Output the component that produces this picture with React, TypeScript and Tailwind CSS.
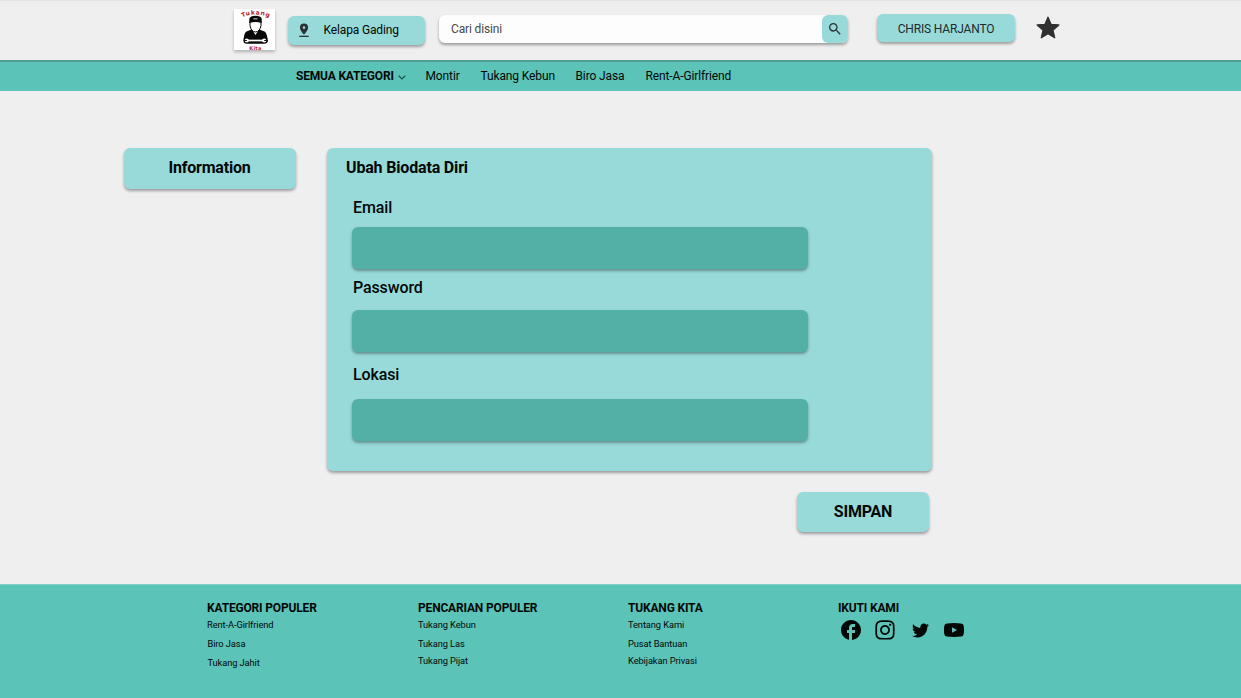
import React from "react";
import { MdSearch, MdFacebook } from "react-icons/md";
import { FaInstagram, FaTwitter } from "react-icons/fa";

const raised = "shadow-[0_2px_3px_rgba(0,0,0,0.34)]";

function Logo() {
  return (
    <svg viewBox="0 0 41 41" className="ml-[234px] mt-[9px] h-[41px] w-[41px] shrink-0 overflow-visible bg-white shadow-[0_2px_3px_rgba(0,0,0,0.25)]">
      <defs>
        <path id="arc" d="M8.300 8.200 Q21.500 2.200 37 9.400" />
      </defs>
      <text fill="#b5232b" fontFamily="DejaVu Sans, sans-serif" fontSize="6" fontWeight="700" textLength="27.500">
        <textPath href="#arc">Tukang</textPath>
      </text>
      <text x="15.300" y="40.700" fill="#b5232b" fontFamily="DejaVu Sans, sans-serif" fontSize="5" fontWeight="700" textLength="12">Kita</text>
      <path d="M17.500 20.500 12.500 22.500Q10.500 23.500 9.800 28.500L9.300 31.500Q9.500 34.800 13 34.800H30Q33.700 34.800 34 31.500L33.200 28Q32.500 23.500 30.500 22.500L25.500 20.500z" fill="#080808" />
      <path d="M18.300 21h6.400l-3.200 5z" fill="#fff" />
      <path d="M16 12h11v4.500q-1 6-5.500 6.500-4.500-.5-5.500-6.500z" fill="#fff" stroke="#080808" strokeWidth="1" />
      <path d="M15.300 14V9.800q.7-3 6.200-3t6.200 3V14q-6-2-12.400 0z" fill="#080808" />
      <path d="M19.500 9.800h4" stroke="#fff" strokeWidth=".8" />
      <path d="M14 31.500h15" stroke="#fff" strokeWidth="1.700" />
      <circle cx="12.800" cy="31.500" r="2.100" fill="#fff" />
      <circle cx="30.200" cy="31.500" r="2.100" fill="#fff" />
      <path d="M10.300 31.500h2.500M30.200 31.500h2.500" stroke="#080808" strokeWidth="1.200" />
    </svg>
  );
}

function Field({ label, className }: { label: string; className: string }) {
  return (
    <label className={`flex flex-col ${className}`}>
      <span className="ml-px h-5 text-[16px] font-medium leading-5 tracking-[-0.13px]">{label}</span>
      <input className={`h-[42px] w-[456px] rounded-md bg-[#53b0a6] px-3 outline-none ${raised}`} />
    </label>
  );
}

function FooterColumn({ title, links, gaps, className }: { title: string; links: string[]; gaps: string[]; className: string }) {
  return (
    <div className={`shrink-0 whitespace-nowrap ${className}`}>
      <h3 className="h-4 text-[12px] font-bold leading-4 tracking-[-0.17px]">{title}</h3>
      {links.map((link, i) => (
        <a key={link} href="#" className={`block h-3 text-[9.300px] leading-3 tracking-[-0.09px] ${gaps[i]}`}>{link}</a>
      ))}
    </div>
  );
}

export default function App() {
  return (
    <div className="flex h-[698px] w-[1241px] flex-col overflow-hidden bg-[#efefef] font-['Roboto',sans-serif] text-[#020807]">
      <header className="flex h-[60px] shrink-0 items-start border-t border-[#e2e2e2]">
        <div className="-mt-px flex items-start">
          <Logo />
          <button className={`ml-[13px] mt-4 flex h-[29px] w-[137px] items-center rounded-md bg-[#98dad9] text-[12px] tracking-[-0.14px] ${raised}`}>
            <svg viewBox="0 0 12 15" className="ml-2.5 h-[15px] w-3" fill="#2b3232">
              <path fillRule="evenodd" d="M6 .5a4.100 4.100 0 0 0-4.100 4.100C1.900 7.600 6 11.700 6 11.700s4.100-4.100 4.100-7.100A4.100 4.100 0 0 0 6 .5zm0 5.400a1.300 1.300 0 1 1 0-2.600 1.300 1.300 0 0 1 0 2.600z" />
              <path d="M1.300 12.700h9.400v1.300H1.300z" />
            </svg>
            <span className="ml-[13.500px] -mt-0.5 whitespace-nowrap">Kelapa Gading</span>
          </button>
          <div className={`ml-3.5 mt-[15px] flex h-7 w-[409px] rounded-md bg-[#fdfdfd] ${raised}`}>
            <input className="min-w-0 flex-1 pl-3 text-[12px] tracking-[-0.14px] outline-none placeholder:text-[#494949] placeholder:opacity-100" placeholder="Cari disini" />
            <button aria-label="Cari" className="flex h-7 w-[26px] items-center justify-center rounded-md bg-[#98dad9] pb-px text-[#283535]">
              <MdSearch size={16} />
            </button>
          </div>
          <button className={`ml-[29px] mt-3.5 h-7 w-[138px] rounded-md bg-[#98dad9] pt-px text-[12px] tracking-[-0.16px] text-[#202b2b] ${raised}`}>CHRIS HARJANTO</button>
          <svg viewBox="0 0 24 24" className="ml-[20px] mt-[15px] h-[26px] w-[26px] text-[#303030]" fill="currentColor" stroke="currentColor" strokeWidth="1.200" strokeLinejoin="round">
            <path d="M12 17.270 18.180 21l-1.640-7.030L22 9.240l-7.190-.61L12 2 9.190 8.630 2 9.240l5.460 4.730L5.820 21z" />
          </svg>
        </div>
      </header>
      <nav className="flex h-[31px] shrink-0 items-start whitespace-nowrap border-t-2 border-[#509f94] bg-[#5bc3b7] pl-[296px] pt-1.5 text-[12px] leading-4 tracking-[-0.12px]">
        <a href="#" className="flex w-[129.500px] items-center font-bold tracking-[-0.18px]">
          SEMUA KATEGORI
          <svg viewBox="0 0 8 5" className="ml-1 mt-0.5 h-[5px] w-2" fill="none" stroke="#174d46" strokeWidth="1.200"><path d="m.6.6 3.400 3.400L7.400.6" /></svg>
        </a>
        <a href="#" className="w-[55px]">Montir</a>
        <a href="#" className="w-[95px]">Tukang Kebun</a>
        <a href="#" className="w-[70px]">Biro Jasa</a>
        <a href="#">Rent-A-Girlfriend</a>
      </nav>
      <main className="flex h-[493px] shrink-0 items-start pl-[124px] pt-[57px]">
        <button className={`h-[41px] w-[172px] rounded-md bg-[#98dad9] pb-0.5 pr-px text-[16px] font-bold tracking-[-0.2px] ${raised}`}>Information</button>
        <form className="ml-[31px] flex w-[605px] flex-col">
          <section className={`h-[323px] rounded-md bg-[#98dad9] ${raised}`}>
            <h1 className="ml-[19px] mt-2.5 h-5 text-[16px] font-bold leading-5 tracking-[-0.17px]">Ubah Biodata Diri</h1>
            <div className="ml-[25px] mt-5">
              <Field label="Email" className="gap-[9px]" />
              <Field label="Password" className="mt-[9px] gap-[11.500px]" />
              <Field label="Lokasi" className="mt-[13.500px] gap-[13.500px]" />
            </div>
          </section>
          <button type="button" className={`ml-[470px] mt-[21px] h-10 w-[132px] rounded-md bg-[#98dad9] text-[16px] font-bold tracking-[-0.2px] ${raised}`}>SIMPAN</button>
        </form>
      </main>
      <footer className="flex h-[114px] shrink-0 items-start border-t border-[#84cfc6] bg-[#5bc3b7] pl-[207px] pt-[15px]">
        <FooterColumn title="KATEGORI POPULER" links={["Rent-A-Girlfriend", "Biro Jasa", "Tukang Jahit"]} gaps={["mt-[3px]", "mt-[7px] pl-[0.5px]", "mt-[7px] pl-[0.5px]"]} className="w-[211px]" />
        <FooterColumn title="PENCARIAN POPULER" links={["Tukang Kebun", "Tukang Las", "Tukang Pijat"]} gaps={["mt-[3px]", "mt-[7px]", "mt-[5px]"]} className="w-[210px]" />
        <FooterColumn title="TUKANG KITA" links={["Tentang Kami", "Pusat Bantuan", "Kebijakan Privasi"]} gaps={["mt-[3px]", "mt-[7px]", "mt-[5px]"]} className="w-[210px]" />
        <div>
          <h3 className="h-4 text-[12px] font-bold leading-4 tracking-[-0.17px]">IKUTI KAMI</h3>
          <div className="mt-0.5 flex h-6 items-center text-[#030807]">
            <MdFacebook size={24} className="ml-px" />
            <FaInstagram size={22} className="ml-[11px]" />
            <FaTwitter size={17} className="ml-4" />
            <svg viewBox="0 0 20 14" className="ml-[15px] h-3.5 w-5" fill="currentColor">
              <path fillRule="evenodd" d="M3 .4Q10-.2 17 .4 19.600.6 19.800 3.200 20.200 7 19.800 10.800 19.600 13.400 17 13.600 10 14.200 3 13.600.4 13.400.2 10.800-.2 7 .2 3.200.4.600 3 .4zM8 4.200v5.600L13 7z" />
            </svg>
          </div>
        </div>
      </footer>
    </div>
  );
}
